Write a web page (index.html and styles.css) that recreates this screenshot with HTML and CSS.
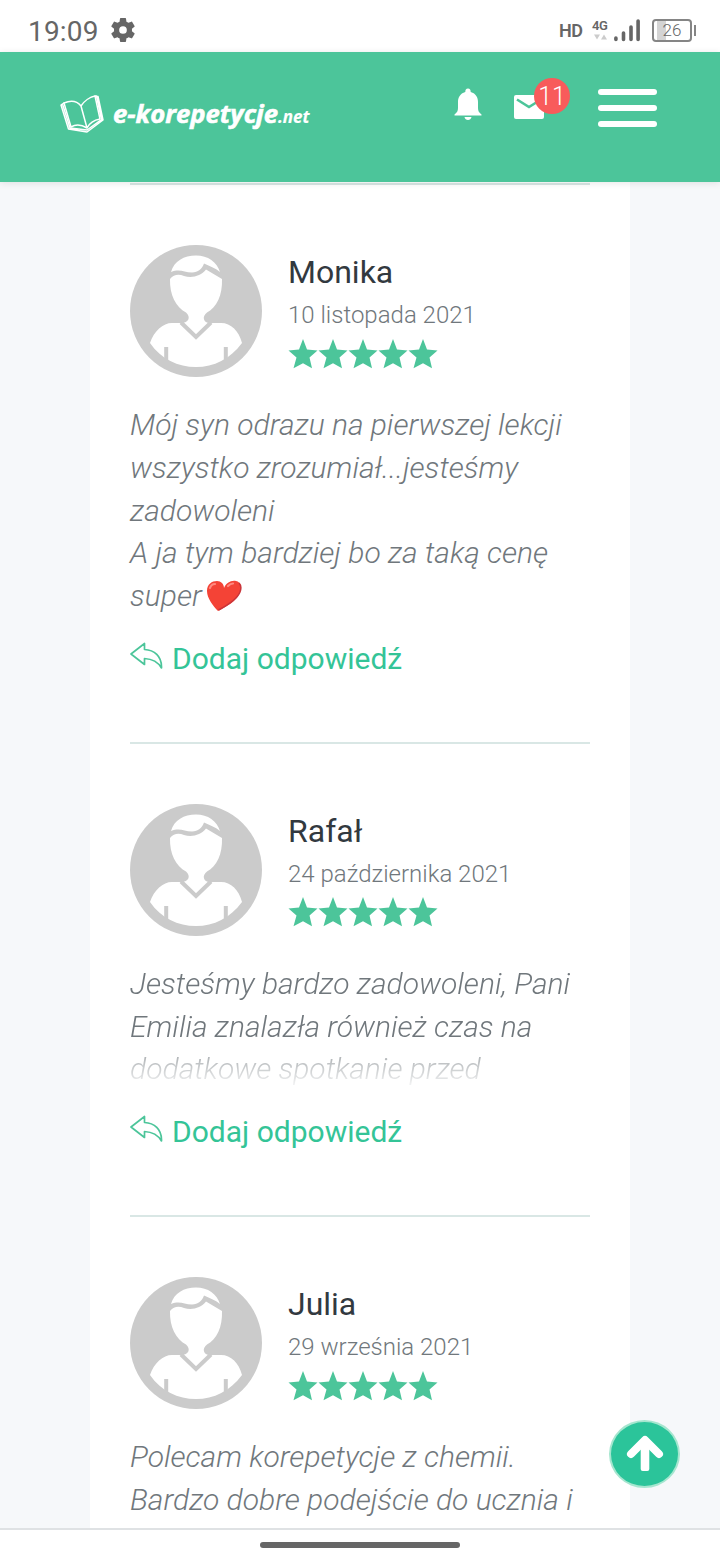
FILE: index.html
```html
<!DOCTYPE html>
<html lang="pl">
<head>
<meta charset="utf-8">
<title>e-korepetycje.net</title>
<link rel="stylesheet" href="styles.css">
</head>
<body>
<svg class="defs" width="0" height="0" aria-hidden="true">
  <symbol id="avatar" viewBox="0 0 132 132">
    <circle cx="66" cy="66" r="66" fill="#cbcbcb"/>
    <path fill="#fff" d="M41 27C44 16 54 10.500 66 10.500C78 10.500 87 17 90 27C86 23.500 80 21 74 18.500C72 24 68 27.500 62 27.500C54 27.500 50 23.500 41 27Z"/>
    <path fill="#fff" d="M40 34C44 29 49 29 54 31C62 33.500 71 31 76 24.500L92 34C92.500 50 87 62 77 67.500C71 72 74 79 81 78L91 78C101 78 109 86 112 98C100 114 84 122 66 122C48 122 31 114 20 98C24 86 33 78 42 78L51 78C59 78 61 72 56 67.500C46 62 39.500 50 40 34Z"/>
    <path d="M51 77.500L66 92L81 77.500" fill="none" stroke="#cbcbcb" stroke-width="4"/>
    <path d="M36.200 102V119M95.800 102V119" stroke="#cbcbcb" stroke-width="4"/>
  </symbol>
  <symbol id="star" viewBox="0 0 30 30">
    <path fill="#4cc59a" d="M15 0L19 10.500L29.500 11.500L21.500 18.500L24 29.300L15 24.200L5.500 29.300L8.500 18.500L.5 11.500L11 10.500Z"/>
  </symbol>
  <symbol id="reply" viewBox="0 0 34 28">
    <path fill="none" stroke="#4cc59a" stroke-width="1.700" stroke-linejoin="round" d="M1 12L14.500 1.500V7.500C24 8 32 14 31.500 26C28 20 23 17 14.500 16.500V22.500Z"/>
  </symbol>
</svg>

<div class="statusbar">
  <span class="clock">19:09</span>
  <svg class="gear" viewBox="2 2 20 20"><path fill="#666" fill-rule="evenodd" d="M19.430 12.980c.04-.32.070-.64.070-.98s-.03-.66-.07-.98l2.110-1.650c.19-.15.240-.42.120-.64l-2-3.460c-.12-.22-.39-.3-.61-.22l-2.490 1c-.52-.4-1.080-.73-1.690-.98l-.38-2.650C14.460 2.180 14.250 2 14 2h-4c-.25 0-.46.180-.49.420l-.38 2.650c-.61.250-1.170.59-1.690.98l-2.490-1c-.23-.09-.49 0-.61.220l-2 3.460c-.13.220-.07.490.12.640l2.110 1.650c-.04.320-.07.650-.07.980s.03.660.070.980l-2.110 1.650c-.19.150-.24.420-.12.640l2 3.460c.12.220.39.300.61.220l2.490-1c.52.400 1.080.730 1.690.980l.38 2.650c.03.240.24.420.49.420h4c.25 0 .46-.18.490-.42l.38-2.650c.61-.25 1.170-.59 1.690-.98l2.490 1c.23.090.49 0 .61-.22l2-3.460c.12-.22.070-.49-.12-.64zM12 15.200a3.200 3.200 0 1 1 0-6.400 3.200 3.200 0 0 1 0 6.400z"/></svg>
  <span class="hd">HD</span>
  <div class="network">
    <span class="gen">4G</span>
    <svg width="13" height="6" viewBox="0 0 13 6"><path fill="#ccc" d="M0 .5H6L3 5.500ZM7 5.500H13L10 .5Z"/></svg>
  </div>
  <svg class="signal" width="26" height="23" viewBox="0 0 26 23"><path stroke="#666" stroke-width="3.600" stroke-linecap="round" d="M1.900 19V20.500M9.500 14V20.500M17 8V20.500M24.100 2V20.500"/></svg>
  <div class="battery"><span>26</span></div>
  <i class="battery-tip"></i>
</div>

<header class="header">
  <svg class="logo" width="252" height="44" viewBox="0 0 252 44">
    <g fill="none" stroke="#fff" stroke-width="1.500" stroke-linejoin="round" stroke-linecap="round">
      <path d="M21 13C17 8 11 7 4 10L11 34C16 31 22 32 27 35ZM21 13C24 8 30 4 35 3L40 26C34 27 29 31 27 35"/>
      <path d="M4 10L1 12L8.500 36L27 39L43 27L38 3.500L35 3M2.500 11L10 35L27 37L41.500 26.500L36.500 3"/>
    </g>
    <text class="logo-name" x="53" y="30" textLength="165" lengthAdjust="spacingAndGlyphs">e-korepetycje</text>
    <text class="logo-tld" x="218" y="30" textLength="31.500" lengthAdjust="spacingAndGlyphs">.net</text>
  </svg>
  <svg class="bell" width="28" height="33" viewBox="0 0 28 33"><path fill="#fff" d="M14 .5C12 .5 11.300 2 11.300 4C6 5.500 4 9.500 4 14V20C4 23 3 24.500.5 26.500V27.500H27.500V26.500C25 24.500 24 23 24 20V14C24 9.500 22 5.500 16.700 4C16.700 2 16 .5 14 .5ZM10.500 29C11 33 17 33 17.500 29Z"/></svg>
  <div class="mail">
    <svg width="30" height="24" viewBox="0 0 30 24"><rect width="30" height="24" rx="2" fill="#fff"/><path d="M3 4.500L15 12L27 4.500" fill="none" stroke="#4cc59a" stroke-width="2.600"/></svg>
    <span class="count">11</span>
  </div>
  <div class="menu"><i></i><i></i><i></i></div>
</header>

<main class="page">
  <div class="reviews">
    <article class="review">
      <div class="author">
        <svg class="avatar"><use href="#avatar"/></svg>
        <div class="meta">
          <div class="name">Monika</div>
          <div class="date">10 listopada 2021</div>
          <div class="stars"><svg><use href="#star"/></svg><svg><use href="#star"/></svg><svg><use href="#star"/></svg><svg><use href="#star"/></svg><svg><use href="#star"/></svg></div>
        </div>
      </div>
      <p class="text">Mój syn odrazu na pierwszej lekcji<br>wszystko zrozumiał...jesteśmy<br>zadowoleni<br>A ja tym bardziej bo za taką cenę<br>super<svg class="heart" width="36" height="32" viewBox="0 0 36 32"><path fill="#f44336" d="M12 31C7 26 1 18 1 11C1 4 6 1 11 1C15 1 18 4 18 8C20 3 25 0 30 1C35 2 36 7 34 12C31 21 20 27 12 31Z"/><path fill="none" stroke="#c9353a" stroke-width="1.500" d="M12.500 30C20 26 31 20 34 12C35.500 8 35 5 33 3"/><path fill="none" stroke="#ff8a80" stroke-width="2.200" stroke-linecap="round" d="M4 8C5 5 7 4 9 4M22 6C24 4 25 3.500 27 3.500"/></svg></p>
      <a class="reply"><svg><use href="#reply"/></svg>Dodaj odpowiedź</a>
    </article>
    <article class="review">
      <div class="author">
        <svg class="avatar"><use href="#avatar"/></svg>
        <div class="meta">
          <div class="name">Rafał</div>
          <div class="date">24 października 2021</div>
          <div class="stars"><svg><use href="#star"/></svg><svg><use href="#star"/></svg><svg><use href="#star"/></svg><svg><use href="#star"/></svg><svg><use href="#star"/></svg></div>
        </div>
      </div>
      <p class="text faded">Jesteśmy bardzo zadowoleni, Pani<br>Emilia znalazła również czas na<br>dodatkowe spotkanie przed</p>
      <a class="reply"><svg><use href="#reply"/></svg>Dodaj odpowiedź</a>
    </article>
    <article class="review">
      <div class="author">
        <svg class="avatar"><use href="#avatar"/></svg>
        <div class="meta">
          <div class="name">Julia</div>
          <div class="date">29 września 2021</div>
          <div class="stars"><svg><use href="#star"/></svg><svg><use href="#star"/></svg><svg><use href="#star"/></svg><svg><use href="#star"/></svg><svg><use href="#star"/></svg></div>
        </div>
      </div>
      <p class="text">Polecam korepetycje z chemii.<br>Bardzo dobre podejście do ucznia i</p>
    </article>
  </div>
  <a class="to-top"><svg width="38" height="36" viewBox="0 0 38 36"><path d="M5 19L19 5L33 19" fill="none" stroke="#fff" stroke-width="8" stroke-linejoin="round" stroke-linecap="round"/><rect x="14.700" y="4" width="8.600" height="32" rx="2" fill="#fff"/></svg></a>
</main>

<footer class="navbar"><i></i></footer>
</body>
</html>
```
FILE: styles.css
```css
* { box-sizing: border-box; }
body {
  margin: 0;
  width: 720px;
  height: 1560px;
  display: flex;
  flex-direction: column;
  overflow: hidden;
  background: #fff;
  font-family: Roboto, "Liberation Sans", sans-serif;
}
svg { display: block; flex: none; }
.defs { position: absolute; }

.statusbar {
  flex: none;
  height: 52px;
  display: flex;
  align-items: center;
  padding: 9px 24px 0 28px;
  color: #666;
}
.clock { width: 83px; padding-top: 1px; font-size: 28px; letter-spacing: 0.2px; }
.gear { width: 24px; height: 24px; margin-top: -1px; }
.hd { margin-left: 424px; width: 33px; font-size: 18px; font-weight: 600; letter-spacing: -0.5px; }
.network { flex: none; width: 22px; display: flex; flex-direction: column; align-items: flex-start; margin-top: -4px; }
.gen { font-size: 13px; line-height: 17px; font-weight: 600; letter-spacing: -0.5px; }
.network svg { margin-left: 2px; }
.signal { margin-top: -1px; }
.battery {
  flex: none;
  width: 40px;
  height: 23px;
  margin-left: 12px;
  border: 2px solid #858585;
  border-radius: 4px;
  font-size: 17px;
  font-weight: 300;
  line-height: 19px;
  text-align: center;
  background: linear-gradient(90deg, transparent 3px, #d4d4d4 3px, #d4d4d4 12px, transparent 12px);
}
.battery-tip { flex: none; width: 2px; height: 11px; margin-left: 2px; background: #858585; }

.header {
  position: relative;
  z-index: 1;
  flex: none;
  height: 130px;
  display: flex;
  align-items: flex-start;
  padding: 0 63px 0 60px;
  background: #4cc59a;
  box-shadow: 0 1px 7px rgba(0, 0, 0, 0.1);
}
.logo { margin-top: 41px; fill: #fff; }
.logo-name, .logo-tld { font-family: "Open Sans", sans-serif; font-weight: 700; font-style: italic; stroke: #fff; }
.logo-name { font-size: 25px; stroke-width: 0.6px; }
.logo-tld { font-size: 17.500px; stroke-width: 0.2px; }
.bell { margin: 36px 0 0 142px; }
.mail { position: relative; margin: 43px 0 0 32px; }
.count {
  position: absolute;
  left: 20px;
  top: -17px;
  width: 36px;
  height: 36px;
  border-radius: 50%;
  background: #f85b5b;
  color: #fff;
  font-size: 25px;
  font-weight: 300;
  line-height: 37px;
  text-align: center;
}
.menu { display: flex; flex-direction: column; gap: 10px; margin: 37px 0 0 54px; }
.menu i { width: 59px; height: 6px; border-radius: 3px; background: #fff; }

.page { position: relative; flex: none; height: 1346px; overflow: hidden; padding: 0 90px; background: #f6f8fa; }
.reviews { min-height: 1346px; padding: 1px 40px 0; background: #fff; }
.review { padding-top: 60px; border-top: 2px solid #d9e7e5; }
.author { display: flex; gap: 26px; height: 132px; }
.avatar { width: 132px; height: 132px; }
.meta { padding-top: 8px; }
.name { font-size: 32px; line-height: 38px; color: #32393f; }
.date { margin-top: 9px; font-size: 24px; line-height: 30px; font-weight: 300; color: #70777c; }
.stars { display: flex; margin-top: 8.500px; }
.stars svg { width: 30px; height: 30px; }
.text {
  margin: 27px 0 0;
  font-size: 30px;
  line-height: 42.800px;
  font-style: italic;
  font-weight: 300;
  color: #70777c;
  white-space: nowrap;
}
.heart { display: inline-block; margin-left: 4px; vertical-align: -6px; }
.faded {
  -webkit-mask-image: linear-gradient(#000 62%, rgba(0, 0, 0, 0.55) 73%, transparent 100%);
  mask-image: linear-gradient(#000 62%, rgba(0, 0, 0, 0.55) 73%, transparent 100%);
}
.reply {
  display: flex;
  gap: 8px;
  margin: 19.200px 0 61.700px;
  font-size: 30px;
  line-height: 43px;
  color: #34c497;
}
.reply svg { width: 34px; height: 28px; margin-top: 5px; }
.to-top {
  position: absolute;
  left: 609px;
  top: 1238px;
  width: 71px;
  height: 68px;
  display: flex;
  align-items: center;
  justify-content: center;
  border: 2px solid #a5e6cf;
  border-radius: 50%;
  background: #2bc49a;
}
.to-top svg { margin-bottom: 2px; }

.navbar { flex: none; height: 32px; display: flex; justify-content: center; border-top: 2px solid #dfe2e4; }
.navbar i { width: 200px; height: 6px; margin-top: 12px; border-radius: 3px; background: #666; }
```
